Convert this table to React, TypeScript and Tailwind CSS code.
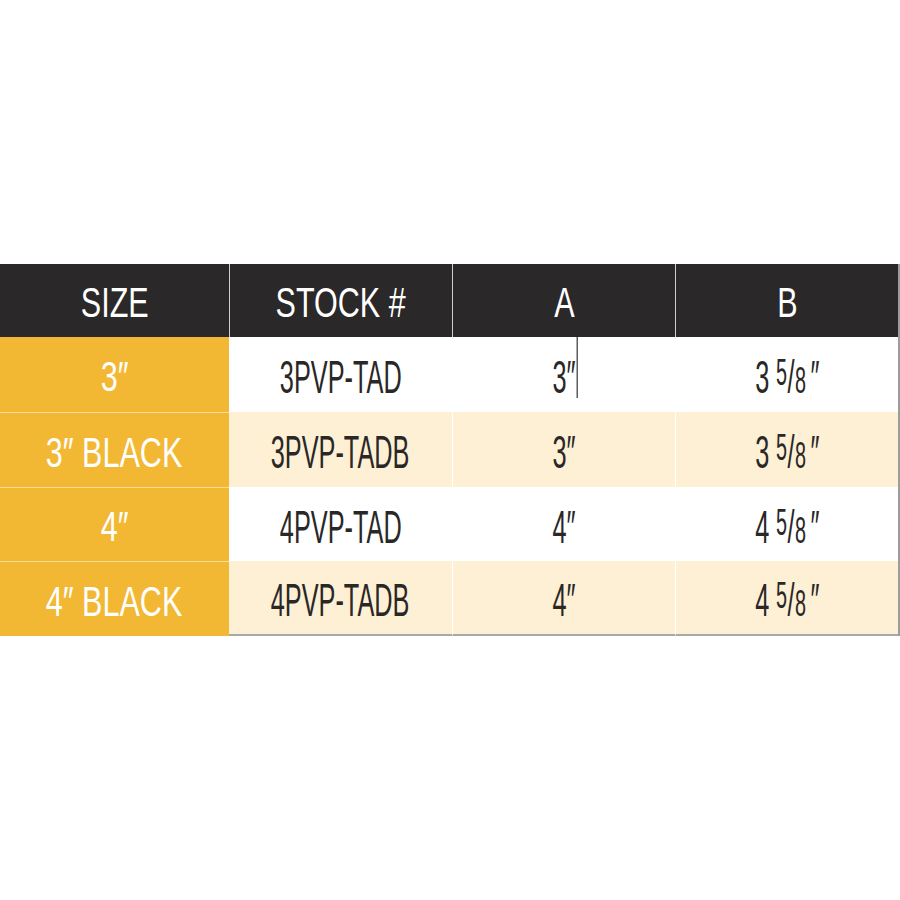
import React from "react";

const FONT = { fontFamily: '"Liberation Sans", "DejaVu Sans", sans-serif' };

function Head({ children }: { children: React.ReactNode }) {
  return (
    <span className="inline-block scale-x-[0.71] whitespace-nowrap text-[43px] leading-none text-white pt-[4px]">
      {children}
    </span>
  );
}

function Body({ children }: { children: React.ReactNode }) {
  return (
    <span className="relative inline-block scale-x-[0.55] whitespace-nowrap text-[46px] leading-none text-[#2a2727] pt-[5px]">
      {children}
    </span>
  );
}

function Frac({ whole }: { whole: string }) {
  return (
    <Body>
      {whole}
      <span className="inline-block w-[12px]" />
      <span className="relative -top-[8px] text-[36px]">5</span>
      <span className="relative mx-[1px] text-[46px]">/</span>
      <span className="text-[36px]">8</span>
      <span className="ml-[8px]">″</span>
    </Body>
  );
}

type Row = { size: string; stock: string; a: string; b: string; bg: string; h: string; last?: boolean; cursor?: boolean };

const rows: Row[] = [
  { size: "3″", stock: "3PVP-TAD", a: "3″", b: "3", bg: "bg-white", h: "h-[75px]", cursor: true },
  { size: "3″ BLACK", stock: "3PVP-TADB", a: "3″", b: "3", bg: "bg-[#fdf0d5]", h: "h-[75px]" },
  { size: "4″", stock: "4PVP-TAD", a: "4″", b: "4", bg: "bg-white", h: "h-[74px]" },
  { size: "4″ BLACK", stock: "4PVP-TADB", a: "4″", b: "4", bg: "bg-[#fdf0d5]", h: "h-[75px]", last: true },
];

export default function App() {
  return (
    <div className="w-[900px] h-[900px] bg-white" style={FONT}>
      <div className="pt-[264px]">
        <div className="flex h-[73px] bg-[#2b2829] border-r-2 border-[#9c9c9c]">
          <div className="w-[229px] flex items-center justify-center"><Head>SIZE</Head></div>
          <div className="w-[223px] flex items-center justify-center border-l border-[#cfcfcf]"><Head>STOCK #</Head></div>
          <div className="w-[223px] flex items-center justify-center border-l border-[#cfcfcf]"><Head>A</Head></div>
          <div className="w-[223px] flex items-center justify-center border-l border-[#cfcfcf]"><Head>B</Head></div>
        </div>
        {rows.map((r, i) => (
          <div key={i} className={`flex ${r.h} border-r-2 border-[#9c9c9c]`}>
            <div className={`w-[229px] flex items-center justify-center bg-[#f2b834] ${i > 0 ? "border-t border-[#f8dc98]" : ""}`}>
              <Head>{r.size}</Head>
            </div>
            <div className={`w-[223px] flex items-center justify-center ${r.bg} ${r.last ? "border-b-2 border-[#a8a8a8]" : ""}`}>
              <Body>{r.stock}</Body>
            </div>
            <div className={`w-[223px] flex items-center justify-center ${r.bg} border-l border-white ${r.last ? "border-b-2 border-b-[#a8a8a8]" : ""}`}>
              <Body>
                {r.a}
                {r.cursor && <span className="absolute left-[100%] top-[-14px] ml-[2px] w-[2px] h-[63px] bg-[#222]" />}
              </Body>
            </div>
            <div className={`w-[223px] flex items-center justify-center ${r.bg} border-l border-white ${r.last ? "border-b-2 border-b-[#a8a8a8]" : ""}`}>
              <Frac whole={r.b} />
            </div>
          </div>
        ))}
      </div>
    </div>
  );
}
